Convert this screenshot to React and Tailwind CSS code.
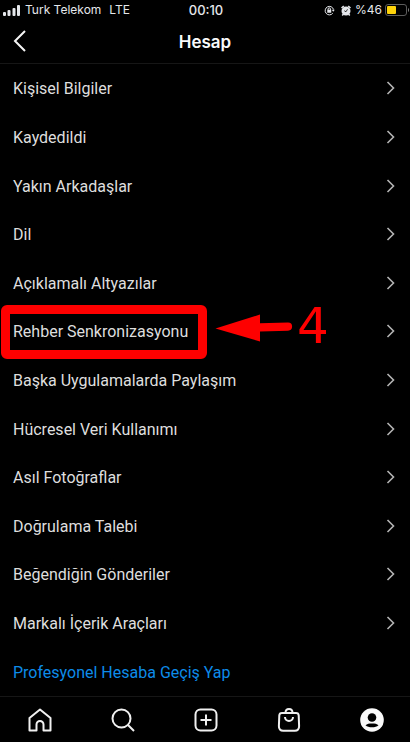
import React from 'react';

const menuItems = [
  { id: 'personal', label: 'Kişisel Bilgiler' },
  { id: 'saved', label: 'Kaydedildi' },
  { id: 'close-friends', label: 'Yakın Arkadaşlar' },
  { id: 'language', label: 'Dil' },
  { id: 'captions', label: 'Açıklamalı Altyazılar' },
  { id: 'contacts', label: 'Rehber Senkronizasyonu', step: '4' },
  { id: 'sharing', label: 'Başka Uygulamalarda Paylaşım' },
  { id: 'data', label: 'Hücresel Veri Kullanımı' },
  { id: 'photos', label: 'Asıl Fotoğraflar' },
  { id: 'verification', label: 'Doğrulama Talebi' },
  { id: 'liked', label: 'Beğendiğin Gönderiler' },
  { id: 'branded', label: 'Markalı İçerik Araçları' }
];

const StatusBar = () => (
  <div className="grid grid-cols-[1fr_auto_1fr] items-center h-5 pl-[3px] pr-px text-xs leading-5 text-gray-200">
    <div className="flex items-center">
      <svg width="18" height="11" viewBox="0 0 18 11" fill="currentColor" aria-hidden="true">
        <rect x="0" y="7" width="3" height="4" rx="1" />
        <rect x="4.500" y="5" width="3" height="6" rx="1" />
        <rect x="9.500" y="3" width="3" height="8" rx="1" />
        <rect x="14" y="0" width="3" height="11" rx="1" />
      </svg>
      <span className="ml-1">Turk Telekom</span>
      <span className="ml-2">LTE</span>
    </div>
    <span className="text-[13px] font-medium">00:10</span>
    <div className="flex items-center justify-end">
      <svg width="11" height="11" viewBox="0 0 22 22" fill="none" stroke="currentColor" strokeWidth="2" aria-hidden="true">
        <path d="M17.5 16.5A8.5 8.5 0 1 1 19 9" />
        <path d="M15.5 9.5h6l-3 4z" fill="currentColor" stroke="none" />
        <rect x="6.5" y="9.5" width="8" height="6" fill="currentColor" stroke="none" />
        <path d="M8.2 10V8a2.3 2.3 0 0 1 4.6 0v2" />
      </svg>
      <svg className="ml-1.5" width="10" height="11" viewBox="0 0 20 22" fill="none" aria-hidden="true">
        <circle cx="10" cy="12" r="9" fill="currentColor" />
        <path d="M1 6l4.500-4M19 6l-4.500-4M4.500 18.500l-2 2.500M15.500 18.500l2 2.500" stroke="currentColor" strokeWidth="3" />
        <path d="M6.500 11.500l3.500 2 3-5" stroke="#000" strokeWidth="1.500" />
      </svg>
      <span className="ml-1">%46</span>
      <svg className="ml-[3px]" width="24" height="12" viewBox="0 0 24 12" fill="none" aria-hidden="true">
        <rect x="0.500" y="0.500" width="21" height="11" rx="2.500" stroke="#5c5c5c" />
        <rect x="2" y="2" width="9" height="8" rx="1" fill="#fdd20a" />
        <path d="M23 4v4a2 2 0 0 0 1-2 2 2 0 0 0-1-2z" fill="#777" />
      </svg>
    </div>
  </div>
);

const Header = () => (
  <header className="grid grid-cols-[1fr_auto_1fr] items-center h-[43px] px-3">
    <button type="button" aria-label="Geri" className="w-6 h-6 justify-self-start">
      <svg width="16" height="24" viewBox="0 0 16 24" fill="none" stroke="#f5f5f5" strokeWidth="2" aria-hidden="true">
        <path d="M13 1L3 11l10 10" />
      </svg>
    </button>
    <h1 className="text-[17px] leading-6 font-semibold text-gray-50">Hesap</h1>
  </header>
);

// Red frame and arrow pointing at the row of the given step
const StepMarker = ({ step }) => (
  <>
    <span className="absolute left-px -top-0.5 w-[206px] h-[54px] border-9 border-[#fe0000] rounded-md pointer-events-none" />
    <span className="absolute left-[215px] inset-y-0 flex items-center pointer-events-none">
      <svg className="mb-1.5" width="78" height="28" viewBox="0 0 78 28" aria-hidden="true">
        <path d="M0.500 14.500L45 0.500v8.800l28-0.800a4 4 0 0 1 0 8.200l-28 0.800V27.500z" fill="#fe0000" />
      </svg>
      <span className="ml-1 mb-2.5 font-['DejaVu_Sans',sans-serif] text-[50px] leading-9 text-[#fe0000]">{step}</span>
    </span>
  </>
);

const MenuRow = ({ item }) => (
  <li className="relative flex flex-1">
    <button type="button" className="flex flex-1 items-center justify-between pl-[13px] pr-[15px] text-left">
      <span className="pt-0.5">{item.label}</span>
      <svg width="9" height="14" viewBox="0 0 9 14" fill="none" stroke="#b4b4b4" strokeWidth="1.600" aria-hidden="true">
        <path d="M1.500 1l6 6-6 6" />
      </svg>
    </button>
    {item.step && <StepMarker step={item.step} />}
  </li>
);

const tabs = [
  {
    label: 'Ana Sayfa',
    icon: <path d="M1.500 10L12 1.500l10.500 8.500v12.500h-7v-6a3.500 3.500 0 0 0-7 0v6h-7z" />
  },
  {
    label: 'Ara',
    icon: (
      <>
        <circle cx="10.500" cy="10.500" r="9" />
        <path d="M17 17l6 6" />
      </>
    )
  },
  {
    label: 'Yeni Gönderi',
    icon: (
      <>
        <rect x="1.500" y="1.500" width="21" height="21" rx="5" />
        <path d="M12 6.500v11M6.500 12h11" />
      </>
    )
  },
  {
    label: 'Alışveriş',
    icon: (
      <>
        <path d="M5 5h14c1.700 0 2.600 0.800 2.700 2.400l0.400 10.600c0.200 3-1.500 4.700-4.300 4.700H6.200c-2.800 0-4.500-1.700-4.300-4.700l0.400-10.600C2.400 5.800 3.300 5 5 5z" />
        <path d="M8.500 4.800C8.500 2.500 10 1 12 1s3.500 1.500 3.500 3.800" />
        <path d="M8 9a4 4 0 0 0 8 0" />
      </>
    )
  },
  {
    label: 'Profil',
    icon: (
      <>
        <circle cx="12" cy="12" r="11.800" fill="#fafafa" stroke="none" />
        <circle cx="12" cy="9.500" r="4.300" fill="#000" stroke="none" />
        <path d="M5.500 17.200c1.500-1.300 3.700-1.700 6.500-1.700s5 0.400 6.500 1.700c-1.700 1.400-3.700 2-6.500 2s-4.800-0.600-6.500-2z" fill="#000" stroke="none" />
      </>
    )
  }
];

const TabBar = () => (
  <nav className="grid grid-cols-5 h-[46px] border-t border-[#161616] -ml-0.5 -mr-[3px]">
    {tabs.map((tab) => (
      <button key={tab.label} type="button" aria-label={tab.label} className="flex items-center justify-center">
        <svg width="24" height="24" viewBox="0 0 24 24" fill="none" stroke="#f0f0f0" strokeWidth="2" strokeLinejoin="round" aria-hidden="true">
          {tab.icon}
        </svg>
      </button>
    ))}
  </nav>
);

const App = () => {
  return (
    <div className="flex flex-col min-h-screen overflow-x-hidden bg-black font-['Inter',sans-serif] text-[#dedede]">
      <StatusBar />
      <Header />
      <main className="flex flex-col flex-1 border-t border-[#161616] font-['Roboto',sans-serif] text-base">
        <ul className="flex flex-col flex-[12]">
          {menuItems.map((item) => (
            <MenuRow key={item.id} item={item} />
          ))}
        </ul>
        <a href="#professional" className="flex flex-1 items-center pl-[13px] pr-[15px] pt-0.5 text-[#0d8ce9]">
          Profesyonel Hesaba Geçiş Yap
        </a>
      </main>
      <TabBar />
    </div>
  );
};

export default App;
